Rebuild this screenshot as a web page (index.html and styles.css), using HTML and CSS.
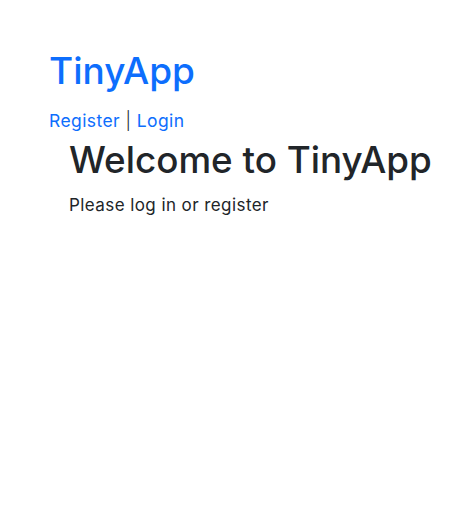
FILE: index.html
```html
<!DOCTYPE html>
<html lang="en">
<head>
<meta charset="utf-8">
<title>TinyApp</title>
<link rel="stylesheet" href="styles.css">
</head>
<body>
<header class="site-header">
  <a class="brand" href="#">TinyApp</a>
  <nav class="auth-nav">
    <a href="#">Register</a> <span class="sep">|</span> <a href="#">Login</a>
  </nav>
</header>
<main class="content">
  <h1 class="title">Welcome to TinyApp</h1>
  <p class="lead-text">Please log in or register</p>
</main>
</body>
</html>
```

FILE: styles.css
```css
html, body {
  margin: 0;
  padding: 0;
  background: #ffffff;
}
body {
  font-family: Inter, "Liberation Sans", sans-serif;
  color: #212529;
  font-size: 17px;
  line-height: 1.5;
  letter-spacing: 0.42px;
}
a {
  color: #0d6efd;
  text-decoration: none;
}
.site-header {
  padding: 49px 0 0 49px;
}
.brand {
  display: block;
  font-size: 37px;
  line-height: 1.2;
  font-weight: 500;
  letter-spacing: 0;
}
.sep {
  font-weight: 300;
}
.auth-nav {
  margin-top: 15.5px;
  font-size: 17.5px;
  line-height: 24px;
}
.content {
  padding-left: 69px;
  margin-top: 5px;
}
.title {
  margin: 0;
  font-size: 36.8px;
  line-height: 1.2;
  font-weight: 500;
  letter-spacing: 0;
}
.lead-text {
  margin: 11.4px 0 0;
}
```
